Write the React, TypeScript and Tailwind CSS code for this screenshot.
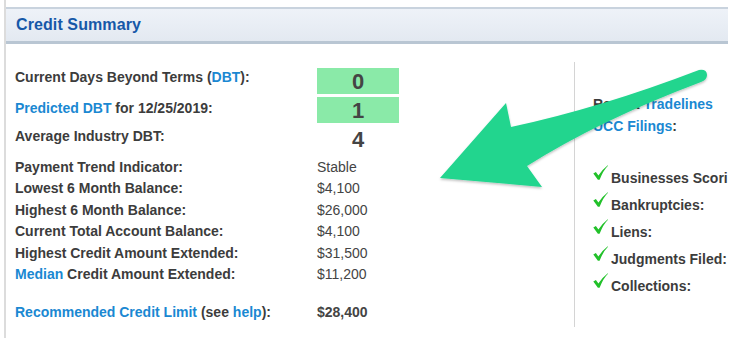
import React from "react";

const Check = () => (
  <svg width="15" height="15" viewBox="0 0 15 15" className="shrink-0">
    <path d="M0.3 8.6 L2.9 7.1 L5.4 10.6 Q9 4.6 14.8 0.2 L15 0.7 Q10.2 5.3 6.6 14.8 L4.9 14.8 Z" fill="#22c12a" />
  </svg>
);

export default function App() {
  const rows: [React.ReactNode, string][] = [
    ["Payment Trend Indicator:", "Stable"],
    ["Lowest 6 Month Balance:", "$4,100"],
    ["Highest 6 Month Balance:", "$26,000"],
    ["Current Total Account Balance:", "$4,100"],
    ["Highest Credit Amount Extended:", "$31,500"],
    [
      <>
        <span className="text-[#1a88d2]">Median</span> Credit Amount Extended:
      </>,
      "$11,200",
    ],
  ];
  const checks = ["Businesses Scoring:", "Bankruptcies:", "Liens:", "Judgments Filed:", "Collections:"];
  return (
    <div
      className="relative w-[750px] h-[338px] bg-white overflow-hidden text-[#3c3c3c]"
      style={{ fontFamily: '"Liberation Sans", Arial, Helvetica, sans-serif' }}
    >
      <div className="ml-[4px] w-[724px] h-full border-l-2 border-[#dcdcdc] overflow-hidden">
        <div className="mt-[7px] h-[37px] border-t-2 border-b-[3px] border-t-[#c9d3de] border-b-[#b9c6d3] bg-gradient-to-b from-[#eef2f8] to-[#e3e9f1] flex items-center pl-[10px]">
          <span className="text-[16px] font-bold text-[#1658a8] tracking-[0.1px]">Credit Summary</span>
        </div>
        <div className="flex">
          <div className="w-[568px] shrink-0 pl-[9px] pt-[24px] text-[14px]">
            <div className="flex h-[26px]">
              <div className="w-[302px] leading-[19px] font-bold">
                Current Days Beyond Terms (<span className="text-[#1a88d2]">DBT</span>):
              </div>
              <div className="w-[82px] h-[26px] bg-[#8aeaa8] flex items-center justify-center text-[22px] font-bold text-[#444]">
                0
              </div>
            </div>
            <div className="flex h-[26px] mt-[3px]">
              <div className="w-[302px] leading-[22px] font-bold">
                <span className="text-[#1a88d2]">Predicted DBT</span> for 12/25/2019:
              </div>
              <div className="w-[82px] h-[26px] bg-[#8aeaa8] flex items-center justify-center text-[22px] font-bold text-[#444]">
                1
              </div>
            </div>
            <div className="flex h-[27px]">
              <div className="w-[302px] leading-[26px] font-bold">Average Industry DBT:</div>
              <div className="w-[82px] text-center text-[22px] leading-[34px] font-bold text-[#444]">4</div>
            </div>
            <div className="mt-[6.5px]">
              {rows.map(([l, v], i) => (
                <div key={i} className="flex h-[21.5px] leading-[21.5px]">
                  <div className="w-[302px] font-bold">{l}</div>
                  <div className="text-[#444]">{v}</div>
                </div>
              ))}
            </div>
            <div className="flex h-[21.5px] leading-[21.5px] mt-[16.5px]">
              <div className="w-[302px] font-bold">
                <span className="text-[#1a88d2]">Recommended Credit Limit</span> (see{" "}
                <span className="text-[#1a88d2]">help</span>):
              </div>
              <div className="font-bold text-[#444]">$28,400</div>
            </div>
          </div>
          <div className="mt-[18px] h-[265px] border-l border-[#d4d4d4] pl-[18px] pt-[32px] text-[14px] font-bold whitespace-nowrap">
            <div className="h-[21.5px] leading-[21.5px]">
              Recent <span className="text-[#1a88d2]">Tradelines</span>
            </div>
            <div className="h-[21.5px] leading-[21.5px]">
              <span className="text-[#1a88d2]">UCC Filings</span>:
            </div>
            <div className="mt-[27.8px]">
              {checks.map((c) => (
                <div key={c} className="flex h-[27px] gap-[3px]">
                  <Check />
                  <span className="leading-[27px]">{c}</span>
                </div>
              ))}
            </div>
          </div>
        </div>
      </div>
      <svg
        className="absolute left-0 top-0 pointer-events-none"
        width="750"
        height="338"
        viewBox="0 0 750 338"
      >
        <defs>
          <filter id="sh" x="-10%" y="-10%" width="120%" height="130%">
            <feDropShadow dx="0" dy="1.5" stdDeviation="1.2" floodColor="#000" floodOpacity="0.25" />
          </filter>
        </defs>
        <path
          d="M440 178 L506 103 L511 127 Q 600 108 699 70 Q 707 69 707 75 Q 707 80 701 82 Q 600 120 527 166 L542 187 Z"
          fill="#20d58e"
          filter="url(#sh)"
        />
      </svg>
    </div>
  );
}
